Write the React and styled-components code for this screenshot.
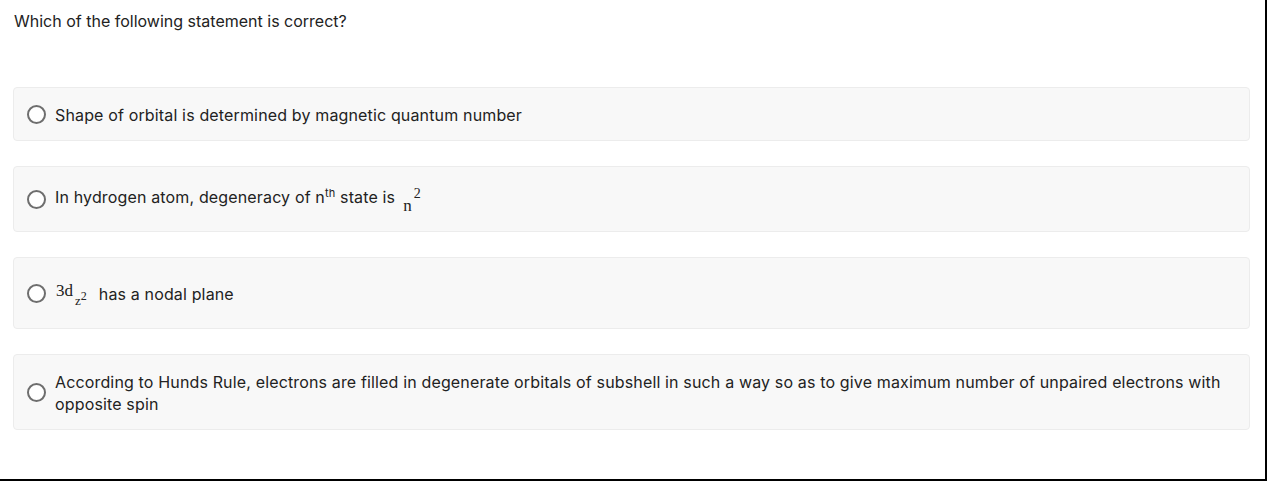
import React from 'react';
import styled, { createGlobalStyle } from 'styled-components';

const GlobalStyle = createGlobalStyle`
  html, body {
    margin: 0;
    padding: 0;
    background: #ffffff;
  }
  * {
    box-sizing: border-box;
  }
`;

const Page = styled.div`
  width: 1267px;
  height: 481px;
  padding: 10px 15px 0 13px;
  border-right: 2px solid #000;
  border-bottom: 2px solid #000;
  font-family: Inter, "Liberation Sans", sans-serif;
  color: #222;
`;

const Question = styled.div`
  font-size: 16px;
  line-height: 22px;
  padding-left: 1px;
  margin-bottom: 55px;
`;

const OptionList = styled.div`
  display: flex;
  flex-direction: column;
  gap: 25px;
`;

const Card = styled.label`
  display: flex;
  align-items: center;
  gap: 9px;
  min-height: ${(p) => p.$minHeight || 54}px;
  padding: 16px 26px 14px 13px;
  background: #f8f8f8;
  border: 1px solid #ececec;
  border-radius: 4px;
  cursor: pointer;
`;

const Radio = styled.span`
  flex: none;
  width: 19px;
  height: 19px;
  margin-top: -2px;
  border: 2px solid #6e6e6e;
  border-radius: 50%;
  background: #fff;
`;

const Text = styled.span`
  font-size: 16px;
  line-height: 22px;
  letter-spacing: 0.15px;
`;

const Sup = styled.sup`
  font-size: 11px;
  vertical-align: 6px;
  line-height: 0;
`;

const Math = styled.span`
  display: inline-block;
  font-family: "Liberation Serif", "DejaVu Serif", serif;
  font-size: 17px;
  line-height: 1;
  letter-spacing: 0;
  vertical-align: ${(p) => p.$shift || 0}px;
  margin: 0 ${(p) => p.$right || 4}px 0 ${(p) => p.$left ?? 4}px;
`;

const MathSup = styled.span`
  display: inline-block;
  font-size: ${(p) => p.$size || 14}px;
  vertical-align: ${(p) => p.$shift || 10}px;
  margin-left: ${(p) => p.$left ?? 2}px;
`;

const MathSub = styled.span`
  display: inline-block;
  font-size: 13px;
  vertical-align: -9px;
  margin-left: 2px;
`;

const options = [
  {
    id: 1,
    minHeight: 54,
    content: <>Shape of orbital is determined by magnetic quantum number</>,
  },
  {
    id: 2,
    minHeight: 66,
    content: (
      <>
        In hydrogen atom, degeneracy of n<Sup>th</Sup> state is
        <Math $shift={-8} $left={8}>
          n<MathSup $shift={13}>2</MathSup>
        </Math>
      </>
    ),
  },
  {
    id: 3,
    minHeight: 72,
    content: (
      <>
        <Math $shift={4} $left={1} $right={12}>
          3d
          <MathSub>
            z<MathSup $shift={5} $left={0} $size={12}>2</MathSup>
          </MathSub>
        </Math>
        has a nodal plane
      </>
    ),
  },
  {
    id: 4,
    minHeight: 76,
    content: (
      <>
        According to Hunds Rule, electrons are filled in degenerate orbitals of subshell in such a
        way so as to give maximum number of unpaired electrons with opposite spin
      </>
    ),
  },
];

const App = () => {
  return (
    <>
      <GlobalStyle />
      <Page>
        <Question>Which of the following statement is correct?</Question>
        <OptionList>
          {options.map((opt) => (
            <Card key={opt.id} $minHeight={opt.minHeight}>
              <Radio />
              <Text>{opt.content}</Text>
            </Card>
          ))}
        </OptionList>
      </Page>
    </>
  );
};

export default App;
